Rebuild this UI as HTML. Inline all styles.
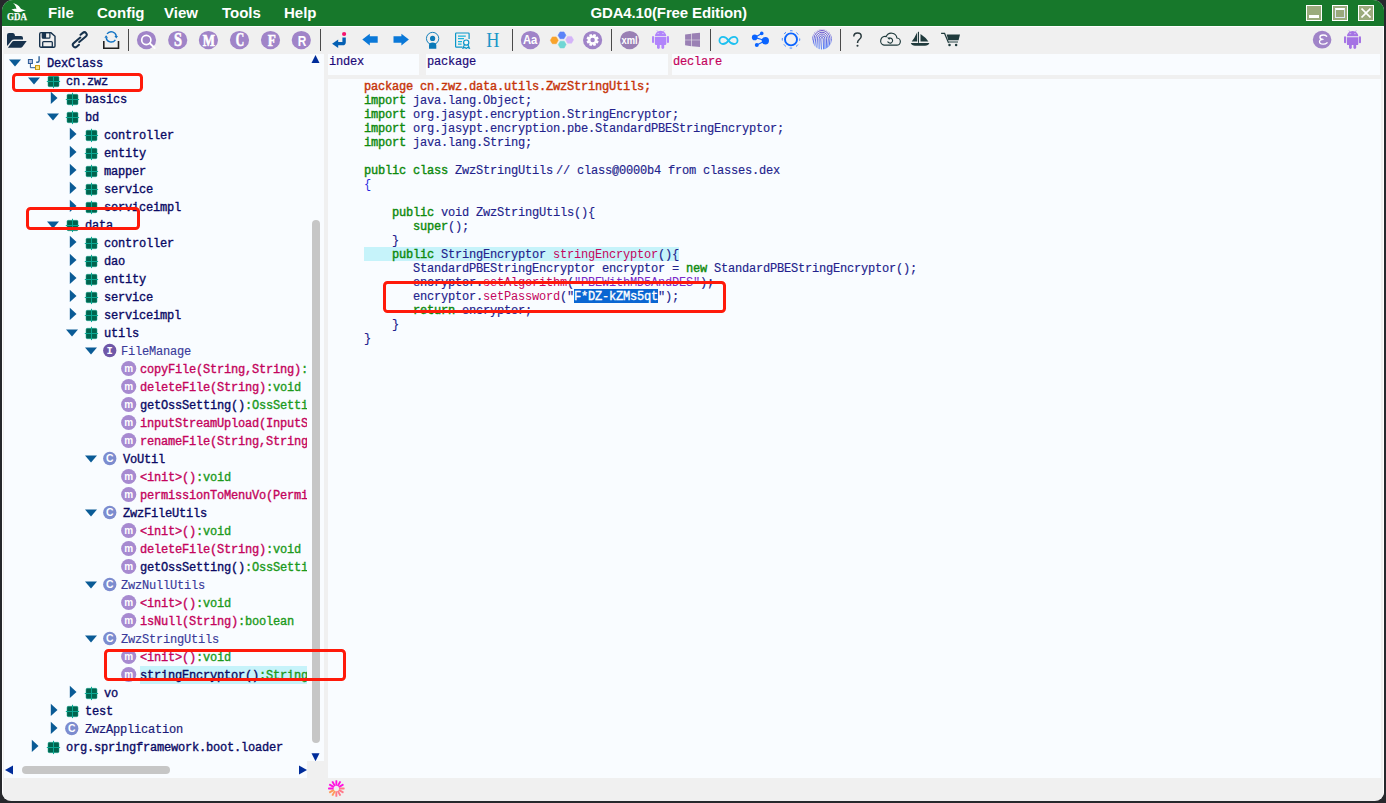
<!DOCTYPE html>
<html><head><meta charset="utf-8"><title>GDA4.10(Free Edition)</title>
<style>
html,body{margin:0;padding:0}
body{width:1386px;height:803px;overflow:hidden;background:#26282c;position:relative;font-family:"Liberation Sans",sans-serif}
#win{position:absolute;left:2px;top:0;width:1382px;height:801px;border-radius:11px 11px 9px 9px;background:#f0f0f0;overflow:hidden}
#edge{position:absolute;left:0;top:26px;width:1380px;height:774px;border:1px solid #fff;border-radius:0 0 9px 9px;pointer-events:none}
#title{position:absolute;left:0;top:0;width:1382px;height:26px;background:#17782b}
#title .mi{position:absolute;top:4px;color:#fff;font-weight:bold;font-size:15px;line-height:18px;white-space:nowrap}
.wb{position:absolute;top:5px;width:14px;height:14px;border:1px solid #fff;background:#9bab7d}
#tb{position:absolute;left:1px;top:27px;width:1380px;height:27px}
#tb svg,#tb div{position:absolute}
.sep{width:1px;top:2px;height:22px;background:#4a4a4a}
.pc{width:19px;height:19px;border-radius:50%;background:#a182c9;top:3.5px;color:#fff;text-align:center;font-weight:bold}
#tree{position:absolute;left:2px;top:54px;width:320px;height:724px;background:#f9fcff;overflow:hidden}
#tclip{position:absolute;left:0;top:0;width:303px;height:707px;overflow:hidden}
#tree svg,#tree div{position:absolute}
.ar path{fill:#0a5b96}
#tree .tt{z-index:3}
.tt{font-family:"Liberation Mono",monospace;font-size:12px;letter-spacing:-0.2px;line-height:18px;height:18px;white-space:pre}
.tt .b{color:#0a0a64;-webkit-text-stroke:0.36px #0a0a64}
.tt .c{color:#c4045c;-webkit-text-stroke:0.36px #c4045c}
.tt .g{color:#1c9a1c;-webkit-text-stroke:0.36px #1c9a1c}
.tt .l{color:#3a3a9a;-webkit-text-stroke:0.15px #3a3a9a}
.tt .l2{color:#1a1a78;-webkit-text-stroke:0.2px #1a1a78}
.ci{width:13px;height:14px;border-radius:50%;color:#fff;font:bold 10px/14px "Liberation Sans",sans-serif;text-align:center}
.cm{width:14px;height:15px;border-radius:50%;background:#a98bd1;color:#fff;font:bold 10px/12px "Liberation Sans",sans-serif;text-align:center}
.hb{position:absolute;top:54px;height:21px;background:#f9fcff;font-family:"Liberation Mono",monospace;font-size:12px;letter-spacing:-0.2px;line-height:14px;white-space:pre}
#code{position:absolute;left:326px;top:79px;width:1053px;height:699px;background:#f9fcff;overflow:hidden}
.cl{z-index:3;position:absolute;left:36px;height:14px;font-family:"Liberation Mono",monospace;font-size:12px;letter-spacing:-0.2px;line-height:14px;white-space:pre;color:#101070}
.cl .k{color:#0e8a0e;-webkit-text-stroke:0.4px #0e8a0e}
.cl .n{color:#22228c;-webkit-text-stroke:0.15px #22228c}
.cl .p{color:#c6340a;-webkit-text-stroke:0.4px #c6340a}
.cl .m{color:#c4045c}
.cl .s{color:#7a28c8}
.cl .br{color:#2a2ae0}
.cl .cm2{color:#22228c;margin-left:3px;-webkit-text-stroke:0.15px #22228c}
.cl .hl{background:linear-gradient(#0a66d2,#0a66d2) no-repeat;background-size:100% 13px;box-shadow:0 -1px 0 #0a66d2;color:#fff;-webkit-text-stroke:0.35px #fff}
.rb{z-index:5;position:absolute;border:3.3px solid #ff1a0a;border-radius:4.5px;box-sizing:border-box}
</style></head><body>
<svg width="0" height="0" style="position:absolute">
<defs>

<symbol id="pkg" viewBox="0 0 13 13" overflow="visible">
<rect x="1" y="1.3" width="11" height="10.4" rx="1.3" fill="#00644e" stroke="#12a892" stroke-width="0.5"/>
<path d="M-0.2 6.5H13.1M6.5 -0.2V13.1" stroke="#0aa893" stroke-width="1" fill="none"/>
</symbol>
<symbol id="dex" viewBox="0 0 14 15">
<rect x="1.4" y="4.5" width="4" height="4" fill="#b4c0e0" stroke="#2a5a96" stroke-width="1"/>
<path d="M3.4 9V12.7H8" fill="none" stroke="#2a5a96" stroke-width="1"/>
<path d="M12.1 1.2V5.8Q12.1 7.3 10.4 7.3H9.2" fill="none" stroke="#2a5f96" stroke-width="1.4"/>
<rect x="8.5" y="10.6" width="4" height="4" fill="#ffe680" stroke="#c8960a" stroke-width="1"/>
</symbol>

</defs></svg>
<div id="win">
<div id="title">
<svg style="position:absolute;left:4px;top:2px" width="24" height="20" viewBox="0 0 24 20"><path d="M7 1C9.5 1.6 13 3.5 14.5 6.2C15.5 7.2 17 7.6 20 8.4C17.5 8.8 15.5 9.4 14 10C11.5 10.6 8.5 10.2 7.2 8.6L5.4 7.6L7.6 7C8.8 6.6 9.8 6.8 10.4 7.2C10.4 5 8.8 2.6 7 1Z" fill="#fff"/><text x="1" y="17.8" font-family="Liberation Serif" font-weight="bold" font-size="11.4" fill="#fff" stroke="#fff" stroke-width="0.25" textLength="20" lengthAdjust="spacingAndGlyphs">GDA</text></svg>
<div class="mi" style="left:46px">File</div>
<div class="mi" style="left:95px">Config</div>
<div class="mi" style="left:162px">View</div>
<div class="mi" style="left:220px">Tools</div>
<div class="mi" style="left:282px">Help</div>
<div class="mi" style="left:588.4px;letter-spacing:-0.13px">GDA4.10(Free Edition)</div>
<div class="wb" style="left:1304px"><div style="position:absolute;left:2px;top:9px;width:10px;height:3px;background:#fff"></div></div>
<div class="wb" style="left:1330px"><div style="position:absolute;left:2px;top:2px;width:10px;height:10px;border:1px solid #dde6f4;border-top:2.5px solid #fff;box-sizing:border-box;background:#9aa87c"></div></div>
<div class="wb" style="left:1356px"><svg style="position:absolute;left:2px;top:2px" width="10" height="10" viewBox="0 0 10 10"><path d="M0.5 0.5L9.5 9.5M9.5 0.5L0.5 9.5" stroke="#fff" stroke-width="1.6"/></svg></div>
</div>
<div id="tb">
<svg style="left:4px;top:5px" width="20" height="16" viewBox="0 0 20 16" ><path d="M0 3Q0 1 2 1H5.8Q7.4 1 7.7 2.6L8 4H14Q16 4 16 6V7.4H7.2Q5.4 7.4 4.4 8.8L0.7 13.6Q0 14 0 12.8Z" fill="#17324d"/><path d="M6.6 9H19.7L15.3 14.9Q14.6 15.7 13.4 15.7H0.9L5.2 9.8Q5.8 9 6.6 9Z" fill="#17324d"/></svg>
<svg style="left:36px;top:4px" width="17" height="18" viewBox="0 -0.5 17 18" ><path d="M2 1.1H11.8L16 4.7V14.4Q16 15.7 14.7 15.7H2Q0.7 15.7 0.7 14.4V2.4Q0.7 1.1 2 1.1Z" fill="none" stroke="#17324d" stroke-width="1.4" stroke-linejoin="round"/><rect x="3.3" y="1.1" width="7.6" height="5.6" rx="0.9" fill="none" stroke="#17324d" stroke-width="1.2"/><rect x="3.3" y="1.1" width="3.8" height="5.6" fill="#17324d"/><rect x="3.7" y="10.1" width="9.6" height="5.6" rx="0.9" fill="none" stroke="#17324d" stroke-width="1.3"/></svg>
<svg style="left:67px;top:4px" width="20" height="18" viewBox="-0.25 -0.3 20 18" ><g transform="translate(9.5 8.5) rotate(-40)" fill="none" stroke="#17324d" stroke-width="2.0" stroke-linecap="round"><path d="M1.8 -1.35H-6.8A2.35 2.35 0 0 0 -6.8 3.35H-3.8"/><path d="M-1.8 1.35H6.8A2.35 2.35 0 0 0 6.8 -3.35H3.8"/></g></svg>
<svg style="left:99px;top:3px" width="19" height="20" viewBox="0 0 19 20" ><path d="M1.8 11V18.2H16.5V11" fill="none" stroke="#222" stroke-width="1.6"/><g fill="none" stroke="#1273c4" stroke-width="1.4"><path d="M5.02 3.97A5.1 5.1 0 0 1 14.25 6.19"/><path d="M13.38 9.83A5.1 5.1 0 0 1 4.15 7.61"/></g><path d="M12.399999999999999 6.0H15.999999999999998L14.299999999999999 8.6Z" fill="#1273c4"/><path d="M2.3999999999999995 7.800000000000001H6.0L4.1 5.2Z" fill="#1273c4"/></svg>
<div class="sep" style="left:125px"></div>
<svg style="left:133px;top:3px" width="21" height="20" viewBox="-0.5 0 21 20" ><ellipse cx="10" cy="10.1" rx="9.6" ry="9.2" fill="#a084c8"/><circle cx="9.8" cy="10" r="4.6" fill="none" stroke="#fff" stroke-width="1.7"/><path d="M13.2 13.3L18.2 18" stroke="#fff" stroke-width="1.9" stroke-linecap="round"/></svg>
<svg style="left:164px;top:3px" width="21" height="20" viewBox="-0.7 0 21 20" ><ellipse cx="10" cy="10.1" rx="9.6" ry="9.2" fill="#a084c8"/><text x="10.3" y="16.2" text-anchor="middle" font-family="Liberation Serif" font-weight="bold" font-size="18.6" fill="#fff" textLength="8.0" lengthAdjust="spacingAndGlyphs" stroke="#fff" stroke-width="0.6">S</text></svg>
<svg style="left:195px;top:3px" width="21" height="20" viewBox="-0.4 0 21 20" ><ellipse cx="10" cy="10.1" rx="9.6" ry="9.2" fill="#a084c8"/><text x="10.5" y="15.7" text-anchor="middle" font-family="Liberation Serif" font-weight="bold" font-size="17.3" fill="#fff" textLength="12.2" lengthAdjust="spacingAndGlyphs" stroke="#fff" stroke-width="0.7">M</text></svg>
<svg style="left:226px;top:3px" width="21" height="20" viewBox="-0.5 0 21 20" ><ellipse cx="10" cy="10.1" rx="9.6" ry="9.2" fill="#a084c8"/><text x="10.4" y="16.2" text-anchor="middle" font-family="Liberation Serif" font-weight="bold" font-size="18.6" fill="#fff" textLength="8.4" lengthAdjust="spacingAndGlyphs" stroke="#fff" stroke-width="0.7">C</text></svg>
<svg style="left:257px;top:3px" width="21" height="20" viewBox="-0.5 0 21 20" ><ellipse cx="10" cy="10.1" rx="9.6" ry="9.2" fill="#a084c8"/><text x="11.3" y="15.7" text-anchor="middle" font-family="Liberation Serif" font-weight="bold" font-size="17.3" fill="#fff" textLength="8.0" lengthAdjust="spacingAndGlyphs" stroke="#fff" stroke-width="0.6">F</text></svg>
<svg style="left:288px;top:3px" width="21" height="20" viewBox="-0.3 0 21 20" ><ellipse cx="10" cy="10.1" rx="9.6" ry="9.2" fill="#a084c8"/><text x="10.7" y="15.5" text-anchor="middle" font-family="Liberation Sans" font-weight="bold" font-size="14.1" fill="#fff" textLength="8.6" lengthAdjust="spacingAndGlyphs">R</text></svg>
<div class="sep" style="left:317px"></div>
<svg style="left:328px;top:4px" width="17" height="18" viewBox="0 0 17 18" ><circle cx="13.1" cy="3" r="2.1" fill="#f5146e"/><path d="M13.1 6.4V11.2Q13.1 12.6 11.6 12.6H6" fill="none" stroke="#0560b4" stroke-width="3.4"/><path d="M1.1 12.8L7.2 8.6V17Z" fill="#0560b4"/></svg>
<svg style="left:359px;top:6px" width="16" height="13" viewBox="0 0 16 13" ><path d="M0.3 6.6L7.8 0.8V3.3H15.7V9.7H7.8V12.4Z" fill="#0a78d8"/></svg>
<svg style="left:390px;top:6px" width="17" height="13" viewBox="-0.2 0 17 13" ><path d="M15.7 6.6L8.2 0.8V3.3H0.3V9.7H8.2V12.4Z" fill="#0a78d8"/></svg>
<svg style="left:422px;top:4px" width="15" height="19" viewBox="0 -0.6 15 19" ><circle cx="7.6" cy="6.9" r="6.15" fill="none" stroke="#0b7ab8" stroke-width="0.95"/><circle cx="7.6" cy="6.8" r="2.6" fill="#0b7ab8"/><path d="M4 17.2V13.8Q4 11 7.6 11Q11.3 11 11.3 13.8V17.2Z" fill="#0b7ab8"/></svg>
<svg style="left:451px;top:5px" width="18" height="17" viewBox="0 0 18 17" ><path d="M8.6 15.2H2.4Q1.6 15.2 1.6 14.4V1.8Q1.6 1 2.4 1H14.3Q15.1 1 15.1 1.8V7" fill="none" stroke="#0a96c8" stroke-width="1.2"/><path d="M4 4.1H11.8M4 6.7H10M4 9.6H8M4 12.2H7.6" stroke="#19b4dc" stroke-width="1.3" fill="none"/><circle cx="12.2" cy="10.6" r="2.6" fill="#f4f8fa" stroke="#0a96c8" stroke-width="1.2"/><path d="M10.4 12.8L9 16.2L11 15.4L12.2 16.6L13.4 15.4L15.4 16.2L14 12.8" fill="none" stroke="#0a96c8" stroke-width="1.1"/></svg>
<svg style="left:481px;top:3px" width="18" height="20" viewBox="0 0 18 20" ><text x="8.8" y="17.4" text-anchor="middle" font-family="Liberation Serif" font-weight="normal" font-size="21.8" fill="#1a96c8" textLength="13.2" lengthAdjust="spacingAndGlyphs">H</text></svg>
<div class="sep" style="left:509px"></div>
<svg style="left:517px;top:3px" width="21" height="20" viewBox="-0.4 0 21 20" ><ellipse cx="10" cy="10.1" rx="9.6" ry="9.2" fill="#a084c8"/><text x="9.7" y="14.3" text-anchor="middle" font-family="Liberation Sans" font-weight="bold" font-size="12.2" fill="#fff" textLength="14.4" lengthAdjust="spacingAndGlyphs">Aa</text></svg>
<svg style="left:546px;top:3px" width="26" height="20" viewBox="0 0 26 20" ><polygon points="9.25,10.30 7.27,13.72 3.32,13.72 1.35,10.30 3.32,6.88 7.27,6.88" fill="#f9a32b" stroke="#f9a32b" stroke-width="0.5" stroke-linejoin="round"/><polygon points="16.95,5.30 14.98,8.72 11.03,8.72 9.05,5.30 11.02,1.88 14.98,1.88" fill="#5a82f8" stroke="#5a82f8" stroke-width="0.5" stroke-linejoin="round"/><polygon points="17.15,14.60 15.18,18.02 11.23,18.02 9.25,14.60 11.23,11.18 15.18,11.18" fill="#6fd6d4" stroke="#6fd6d4" stroke-width="0.5" stroke-linejoin="round"/><polygon points="24.55,9.80 22.58,13.22 18.63,13.22 16.65,9.80 18.63,6.38 22.58,6.38" fill="#d4b4f8" stroke="#d4b4f8" stroke-width="0.5" stroke-linejoin="round"/></svg>
<svg style="left:579px;top:3px" width="21" height="20" viewBox="-0.6 0 21 20" ><ellipse cx="10" cy="10.1" rx="9.6" ry="9.2" fill="#a084c8"/><path d="M8.75 3.9000000000000004H11.25L11.75 6.6H8.25Z" transform="rotate(22.5 10 10)" fill="#fff"/><path d="M8.75 3.9000000000000004H11.25L11.75 6.6H8.25Z" transform="rotate(67.5 10 10)" fill="#fff"/><path d="M8.75 3.9000000000000004H11.25L11.75 6.6H8.25Z" transform="rotate(112.5 10 10)" fill="#fff"/><path d="M8.75 3.9000000000000004H11.25L11.75 6.6H8.25Z" transform="rotate(157.5 10 10)" fill="#fff"/><path d="M8.75 3.9000000000000004H11.25L11.75 6.6H8.25Z" transform="rotate(202.5 10 10)" fill="#fff"/><path d="M8.75 3.9000000000000004H11.25L11.75 6.6H8.25Z" transform="rotate(247.5 10 10)" fill="#fff"/><path d="M8.75 3.9000000000000004H11.25L11.75 6.6H8.25Z" transform="rotate(292.5 10 10)" fill="#fff"/><path d="M8.75 3.9000000000000004H11.25L11.75 6.6H8.25Z" transform="rotate(337.5 10 10)" fill="#fff"/><circle cx="10" cy="10" r="4.25" fill="#fff"/><circle cx="10" cy="10" r="2.2" fill="#a084c8"/></svg>
<div class="sep" style="left:608px"></div>
<svg style="left:616px;top:3px" width="21" height="20" viewBox="-0.6 0 21 20" ><ellipse cx="10" cy="10.1" rx="9.6" ry="9.2" fill="#9a80b4"/><text x="10" y="14.1" text-anchor="middle" font-family="Liberation Sans" font-weight="bold" font-size="10" fill="#fff" textLength="16.2" lengthAdjust="spacingAndGlyphs">xml</text></svg>
<svg style="left:649px;top:3px" width="17" height="19" viewBox="0 0 17 19" ><g fill="#b184fb" color="#b184fb"><path d="M2.9 7.1H14.3V13.8Q14.3 15 13.1 15H4.1Q2.9 15 2.9 13.8Z"/><path d="M2.9 6.2A5.7 5.4 0 0 1 14.3 6.2Z"/><rect x="0" y="6.1" width="2.1" height="7" rx="1.05"/><rect x="14.9" y="6.1" width="2.1" height="7" rx="1.05"/><rect x="5" y="13.5" width="2.8" height="5.4" rx="1.4"/><rect x="9.4" y="13.5" width="2.8" height="5.4" rx="1.4"/><path d="M4.9 0.3L5.9 1.9M12.3 0.3L11.3 1.9" stroke-width="0.6" fill="none" stroke="currentColor"/></g><rect x="5.4" y="3.3" width="1.8" height="0.7" fill="#dcc8fa"/><rect x="10" y="3.3" width="1.8" height="0.7" fill="#dcc8fa"/></svg>
<svg style="left:682px;top:5px" width="16" height="16" viewBox="0 -0.5 16 16" ><g fill="#9a80b4"><path d="M0.1 2L6.2 1.2V7.25H0.1Z"/><path d="M6.75 1.1L15 0.3V7.25H6.75Z"/><path d="M0.1 7.8H6.2V13.7L0.1 12.8Z"/><path d="M6.75 7.8H15V14.6L6.75 13.8Z"/></g></svg>
<div class="sep" style="left:707px"></div>
<svg style="left:714px;top:8px" width="23" height="11" viewBox="0 0 23 11" ><path d="M11.5 5.45C9.7 2.8 7.9 1.9 6 1.9A3.55 3.55 0 0 0 6 9C7.9 9 9.7 8.1 11.5 5.45C13.3 2.8 15.1 1.9 17 1.9A3.55 3.55 0 0 1 17 9C15.1 9 13.3 8.1 11.5 5.45Z" fill="none" stroke="#1ec0f0" stroke-width="1.8"/></svg>
<svg style="left:748px;top:4px" width="19" height="16" viewBox="0 0 19 16" ><g fill="#0a64ff"><circle cx="3.7" cy="6.4" r="2.8"/><circle cx="10.7" cy="2.4" r="1.8"/><circle cx="14.3" cy="9.7" r="3.7"/><circle cx="5.8" cy="13.9" r="2"/><path d="M3.7 6.4L10.7 2.4M3.7 6.4L14.3 9.7L5.8 13.9" stroke="#0a64ff" stroke-width="1.1" fill="none"/></g></svg>
<svg style="left:777px;top:1px" width="22" height="23" viewBox="0 -0.4 22 23" ><circle cx="11" cy="11" r="6" fill="none" stroke="#0a64ff" stroke-width="1.9"/><circle cx="11" cy="11" r="8.7" fill="none" stroke="#0a64ff" stroke-width="0.8" stroke-dasharray="2.6 4.233" stroke-dashoffset="1.3"/></svg>
<svg style="left:808px;top:1px" width="22" height="23" viewBox="0 -0.4 22 23" ><defs><linearGradient id="fpg" gradientUnits="userSpaceOnUse" x1="0" y1="1" x2="0" y2="21"><stop offset="0" stop-color="#5a3cc0"/><stop offset="1" stop-color="#3a70ff"/></linearGradient><clipPath id="fpc"><ellipse cx="11" cy="11" rx="9.9" ry="10.2"/></clipPath></defs><g clip-path="url(#fpc)"><path d="M10.61 23L9.8 10.4A1.2 1.25 0 0 1 12.2 10.4L12.65 23" fill="none" stroke="url(#fpg)" stroke-width="0.85"/><path d="M8.10 23L8.1 10.4A2.9 3.02 0 0 1 13.9 10.4L13.90 23" fill="none" stroke="url(#fpg)" stroke-width="0.85"/><path d="M5.59 23L6.4 10.4A4.6 4.78 0 0 1 15.6 10.4L15.15 23" fill="none" stroke="url(#fpg)" stroke-width="0.85"/><path d="M3.08 23L4.7 10.4A6.3 6.55 0 0 1 17.3 10.4L16.40 23" fill="none" stroke="url(#fpg)" stroke-width="0.85"/><path d="M0.57 23L3.0 10.4A8.0 8.32 0 0 1 19.0 10.4L17.65 23" fill="none" stroke="url(#fpg)" stroke-width="0.85"/><path d="M-1.94 23L1.3000000000000007 10.4A9.7 10.09 0 0 1 20.7 10.4L18.90 23" fill="none" stroke="url(#fpg)" stroke-width="0.85"/></g></svg>
<div class="sep" style="left:837px"></div>
<svg style="left:846px;top:3px" width="18" height="20" viewBox="0 0 18 20" ><path d="M4.8 6.6Q4.8 3 8.6 3Q12.2 3 12.2 6.2Q12.2 8 10.3 9.5Q8.5 10.9 8.5 13.1" fill="none" stroke="#2a3a3e" stroke-width="1.5"/><circle cx="8.5" cy="15.8" r="1.05" fill="#2a3a3e"/></svg>
<svg style="left:875px;top:5px" width="24" height="15" viewBox="0 0 24 15" ><path d="M6 13.2H18.6A3.6 3.6 0 0 0 18.9 6A5.6 5.6 0 0 0 8.2 4.6A4.4 4.4 0 0 0 6 13.2Z" fill="none" stroke="#1f3a3c" stroke-width="1.2"/><path d="M10.6 6.6A2.5 2.5 0 1 1 9.7 9.3" fill="none" stroke="#1f3a3c" stroke-width="1.1"/><path d="M9 5.6L11.8 5.4L11.4 8Z" fill="#1f3a3c"/></svg>
<svg style="left:907px;top:4px" width="20" height="16" viewBox="0 0 20 16" ><g fill="#1f3a3c"><path d="M7.2 1.2V10.6H1.7Q4.6 7 7.2 1.2Z"/><path d="M10.5 3.1Q15.6 6.4 18.4 10.6H10.5Z"/><rect x="8" y="0.8" width="1" height="11" /><path d="M0.8 12H19.4Q18.4 14.8 15 14.8H5Q1.8 14.8 0.8 12Z"/></g></svg>
<svg style="left:937px;top:5px" width="21" height="15" viewBox="0 0 21 15" ><g fill="#1f3a3c"><path d="M6.7 2.6H20L18.6 8.2H8.2Z"/><path d="M1.1 1.4H4.6L8.6 11" fill="none" stroke="#1f3a3c" stroke-width="1.2"/><path d="M8 10H18" stroke="#4a6264" stroke-width="1.2"/><circle cx="9.5" cy="12.9" r="1.25"/><circle cx="16.1" cy="12.9" r="1.25"/></g></svg>
<svg style="left:1309px;top:2px" width="21" height="21" viewBox="-0.1 -0.6 21 21" ><ellipse cx="10" cy="10.1" rx="9.3" ry="8.9" fill="#a084c8"/><path d="M14.6 6.6Q13.4 5.4 11 5.4Q7.8 5.4 7.8 7.6Q7.8 9.7 11 9.8Q7.4 9.9 7.4 12.2Q7.4 14.6 11 14.6Q13.6 14.6 15 13.2" fill="none" stroke="#fff" stroke-width="1.3" stroke-linecap="round"/><circle cx="11.2" cy="9.8" r="0.7" fill="#d8c8f0"/></svg>
<svg style="left:1341px;top:3px" width="17" height="20" viewBox="0 -0.1 17 20" ><g fill="#a573e4" color="#a573e4"><path d="M2.9 7.1H14.3V13.8Q14.3 15 13.1 15H4.1Q2.9 15 2.9 13.8Z"/><path d="M2.9 6.2A5.7 5.4 0 0 1 14.3 6.2Z"/><rect x="0" y="6.1" width="2.1" height="7" rx="1.05"/><rect x="14.9" y="6.1" width="2.1" height="7" rx="1.05"/><rect x="5" y="13.5" width="2.8" height="5.4" rx="1.4"/><rect x="9.4" y="13.5" width="2.8" height="5.4" rx="1.4"/><path d="M4.9 0.3L5.9 1.9M12.3 0.3L11.3 1.9" stroke-width="0.6" fill="none" stroke="currentColor"/></g><rect x="5.4" y="3.3" width="1.8" height="0.7" fill="#dcc8fa"/><rect x="10" y="3.3" width="1.8" height="0.7" fill="#dcc8fa"/></svg>
</div>
<div id="tree">
<div id="tclip">
<svg class="ar" style="left:5px;top:5px" width="12" height="8" viewBox="0 0 12 8"><path d="M0 0.5H12L6 7.4Z"/></svg>
<svg class="ic" style="left:23px;top:1px" width="14" height="15" viewBox="0 0 14 15"><use href="#dex"/></svg>
<div class="tt" style="left:43px;top:1px"><span class="b">DexClass</span></div>
<svg class="ar" style="left:24px;top:23px" width="12" height="8" viewBox="0 0 12 8"><path d="M0 0.5H12L6 7.4Z"/></svg>
<svg class="ic" style="left:43px;top:21px;overflow:visible" width="13" height="13" viewBox="0 0 13 13"><use href="#pkg"/></svg>
<div class="tt" style="left:62px;top:19px"><span class="b">cn.zwz</span></div>
<svg class="ar" style="left:46px;top:37px" width="8" height="14" viewBox="0 0 8 14"><path d="M0.8 0.8L7.5 6.9L0.8 13Z"/></svg>
<svg class="ic" style="left:62px;top:39px;overflow:visible" width="13" height="13" viewBox="0 0 13 13"><use href="#pkg"/></svg>
<div class="tt" style="left:81px;top:37px"><span class="b">basics</span></div>
<svg class="ar" style="left:43px;top:59px" width="12" height="8" viewBox="0 0 12 8"><path d="M0 0.5H12L6 7.4Z"/></svg>
<svg class="ic" style="left:62px;top:57px;overflow:visible" width="13" height="13" viewBox="0 0 13 13"><use href="#pkg"/></svg>
<div class="tt" style="left:81px;top:55px"><span class="b">bd</span></div>
<svg class="ar" style="left:65px;top:73px" width="8" height="14" viewBox="0 0 8 14"><path d="M0.8 0.8L7.5 6.9L0.8 13Z"/></svg>
<svg class="ic" style="left:81px;top:75px;overflow:visible" width="13" height="13" viewBox="0 0 13 13"><use href="#pkg"/></svg>
<div class="tt" style="left:100px;top:73px"><span class="b">controller</span></div>
<svg class="ar" style="left:65px;top:91px" width="8" height="14" viewBox="0 0 8 14"><path d="M0.8 0.8L7.5 6.9L0.8 13Z"/></svg>
<svg class="ic" style="left:81px;top:93px;overflow:visible" width="13" height="13" viewBox="0 0 13 13"><use href="#pkg"/></svg>
<div class="tt" style="left:100px;top:91px"><span class="b">entity</span></div>
<svg class="ar" style="left:65px;top:109px" width="8" height="14" viewBox="0 0 8 14"><path d="M0.8 0.8L7.5 6.9L0.8 13Z"/></svg>
<svg class="ic" style="left:81px;top:111px;overflow:visible" width="13" height="13" viewBox="0 0 13 13"><use href="#pkg"/></svg>
<div class="tt" style="left:100px;top:109px"><span class="b">mapper</span></div>
<svg class="ar" style="left:65px;top:127px" width="8" height="14" viewBox="0 0 8 14"><path d="M0.8 0.8L7.5 6.9L0.8 13Z"/></svg>
<svg class="ic" style="left:81px;top:129px;overflow:visible" width="13" height="13" viewBox="0 0 13 13"><use href="#pkg"/></svg>
<div class="tt" style="left:100px;top:127px"><span class="b">service</span></div>
<svg class="ar" style="left:65px;top:145px" width="8" height="14" viewBox="0 0 8 14"><path d="M0.8 0.8L7.5 6.9L0.8 13Z"/></svg>
<svg class="ic" style="left:81px;top:147px;overflow:visible" width="13" height="13" viewBox="0 0 13 13"><use href="#pkg"/></svg>
<div class="tt" style="left:100px;top:145px"><span class="b">serviceimpl</span></div>
<svg class="ar" style="left:43px;top:167px" width="12" height="8" viewBox="0 0 12 8"><path d="M0 0.5H12L6 7.4Z"/></svg>
<svg class="ic" style="left:62px;top:165px;overflow:visible" width="13" height="13" viewBox="0 0 13 13"><use href="#pkg"/></svg>
<div class="tt" style="left:81px;top:163px"><span class="b">data</span></div>
<svg class="ar" style="left:65px;top:181px" width="8" height="14" viewBox="0 0 8 14"><path d="M0.8 0.8L7.5 6.9L0.8 13Z"/></svg>
<svg class="ic" style="left:81px;top:183px;overflow:visible" width="13" height="13" viewBox="0 0 13 13"><use href="#pkg"/></svg>
<div class="tt" style="left:100px;top:181px"><span class="b">controller</span></div>
<svg class="ar" style="left:65px;top:199px" width="8" height="14" viewBox="0 0 8 14"><path d="M0.8 0.8L7.5 6.9L0.8 13Z"/></svg>
<svg class="ic" style="left:81px;top:201px;overflow:visible" width="13" height="13" viewBox="0 0 13 13"><use href="#pkg"/></svg>
<div class="tt" style="left:100px;top:199px"><span class="b">dao</span></div>
<svg class="ar" style="left:65px;top:217px" width="8" height="14" viewBox="0 0 8 14"><path d="M0.8 0.8L7.5 6.9L0.8 13Z"/></svg>
<svg class="ic" style="left:81px;top:219px;overflow:visible" width="13" height="13" viewBox="0 0 13 13"><use href="#pkg"/></svg>
<div class="tt" style="left:100px;top:217px"><span class="b">entity</span></div>
<svg class="ar" style="left:65px;top:235px" width="8" height="14" viewBox="0 0 8 14"><path d="M0.8 0.8L7.5 6.9L0.8 13Z"/></svg>
<svg class="ic" style="left:81px;top:237px;overflow:visible" width="13" height="13" viewBox="0 0 13 13"><use href="#pkg"/></svg>
<div class="tt" style="left:100px;top:235px"><span class="b">service</span></div>
<svg class="ar" style="left:65px;top:253px" width="8" height="14" viewBox="0 0 8 14"><path d="M0.8 0.8L7.5 6.9L0.8 13Z"/></svg>
<svg class="ic" style="left:81px;top:255px;overflow:visible" width="13" height="13" viewBox="0 0 13 13"><use href="#pkg"/></svg>
<div class="tt" style="left:100px;top:253px"><span class="b">serviceimpl</span></div>
<svg class="ar" style="left:62px;top:275px" width="12" height="8" viewBox="0 0 12 8"><path d="M0 0.5H12L6 7.4Z"/></svg>
<svg class="ic" style="left:81px;top:273px;overflow:visible" width="13" height="13" viewBox="0 0 13 13"><use href="#pkg"/></svg>
<div class="tt" style="left:100px;top:271px"><span class="b">utils</span></div>
<svg class="ar" style="left:81px;top:293px" width="12" height="8" viewBox="0 0 12 8"><path d="M0 0.5H12L6 7.4Z"/></svg>
<svg class="ic" style="left:99px;top:289px" width="14" height="15" viewBox="0 0 14 15"><circle cx="6.75" cy="7.5" r="6.65" fill="#6f57a8"/><text x="6.75" y="10.9" text-anchor="middle" font-family="Liberation Mono" font-weight="bold" font-size="10.5" fill="#fff">I</text></svg>
<div class="tt" style="left:117px;top:289px"><span class="l">FileManage</span></div>
<svg class="ic" style="left:116px;top:306px" width="17" height="17" viewBox="0 0 17 17"><circle cx="8.7" cy="8.5" r="7.6" fill="#a78ad0"/><text x="8.7" y="11.9" text-anchor="middle" font-family="Liberation Sans" font-weight="bold" font-size="10" fill="#fff">m</text></svg>
<div class="tt" style="left:136px;top:307px"><span class="c">copyFile(String,String)</span><span class="g">:void</span></div>
<svg class="ic" style="left:116px;top:324px" width="17" height="17" viewBox="0 0 17 17"><circle cx="8.7" cy="8.5" r="7.6" fill="#a78ad0"/><text x="8.7" y="11.9" text-anchor="middle" font-family="Liberation Sans" font-weight="bold" font-size="10" fill="#fff">m</text></svg>
<div class="tt" style="left:136px;top:325px"><span class="c">deleteFile(String)</span><span class="g">:void</span></div>
<svg class="ic" style="left:116px;top:342px" width="17" height="17" viewBox="0 0 17 17"><circle cx="8.7" cy="8.5" r="7.6" fill="#a78ad0"/><text x="8.7" y="11.9" text-anchor="middle" font-family="Liberation Sans" font-weight="bold" font-size="10" fill="#fff">m</text></svg>
<div class="tt" style="left:136px;top:343px"><span class="b">getOssSetting()</span><span class="g">:OssSetting</span></div>
<svg class="ic" style="left:116px;top:360px" width="17" height="17" viewBox="0 0 17 17"><circle cx="8.7" cy="8.5" r="7.6" fill="#a78ad0"/><text x="8.7" y="11.9" text-anchor="middle" font-family="Liberation Sans" font-weight="bold" font-size="10" fill="#fff">m</text></svg>
<div class="tt" style="left:136px;top:361px"><span class="c">inputStreamUpload(InputStream)</span><span class="g">:void</span></div>
<svg class="ic" style="left:116px;top:378px" width="17" height="17" viewBox="0 0 17 17"><circle cx="8.7" cy="8.5" r="7.6" fill="#a78ad0"/><text x="8.7" y="11.9" text-anchor="middle" font-family="Liberation Sans" font-weight="bold" font-size="10" fill="#fff">m</text></svg>
<div class="tt" style="left:136px;top:379px"><span class="c">renameFile(String,String)</span><span class="g">:void</span></div>
<svg class="ar" style="left:81px;top:401px" width="12" height="8" viewBox="0 0 12 8"><path d="M0 0.5H12L6 7.4Z"/></svg>
<svg class="ic" style="left:99px;top:397px" width="14" height="15" viewBox="0 0 14 15"><circle cx="6.75" cy="7.5" r="6.65" fill="#7c8ccf"/><text x="6.75" y="11.2" text-anchor="middle" font-family="Liberation Sans" font-weight="bold" font-size="10.4" fill="#fff">C</text></svg>
<div class="tt" style="left:119px;top:397px"><span class="b">VoUtil</span></div>
<svg class="ic" style="left:116px;top:414px" width="17" height="17" viewBox="0 0 17 17"><circle cx="8.7" cy="8.5" r="7.6" fill="#a78ad0"/><text x="8.7" y="11.9" text-anchor="middle" font-family="Liberation Sans" font-weight="bold" font-size="10" fill="#fff">m</text></svg>
<div class="tt" style="left:136px;top:415px"><span class="c">&lt;init&gt;()</span><span class="g">:void</span></div>
<svg class="ic" style="left:116px;top:432px" width="17" height="17" viewBox="0 0 17 17"><circle cx="8.7" cy="8.5" r="7.6" fill="#a78ad0"/><text x="8.7" y="11.9" text-anchor="middle" font-family="Liberation Sans" font-weight="bold" font-size="10" fill="#fff">m</text></svg>
<div class="tt" style="left:136px;top:433px"><span class="c">permissionToMenuVo(Permission)</span><span class="g">:void</span></div>
<svg class="ar" style="left:81px;top:455px" width="12" height="8" viewBox="0 0 12 8"><path d="M0 0.5H12L6 7.4Z"/></svg>
<svg class="ic" style="left:99px;top:451px" width="14" height="15" viewBox="0 0 14 15"><circle cx="6.75" cy="7.5" r="6.65" fill="#7c8ccf"/><text x="6.75" y="11.2" text-anchor="middle" font-family="Liberation Sans" font-weight="bold" font-size="10.4" fill="#fff">C</text></svg>
<div class="tt" style="left:119px;top:451px"><span class="b">ZwzFileUtils</span></div>
<svg class="ic" style="left:116px;top:468px" width="17" height="17" viewBox="0 0 17 17"><circle cx="8.7" cy="8.5" r="7.6" fill="#a78ad0"/><text x="8.7" y="11.9" text-anchor="middle" font-family="Liberation Sans" font-weight="bold" font-size="10" fill="#fff">m</text></svg>
<div class="tt" style="left:136px;top:469px"><span class="c">&lt;init&gt;()</span><span class="g">:void</span></div>
<svg class="ic" style="left:116px;top:486px" width="17" height="17" viewBox="0 0 17 17"><circle cx="8.7" cy="8.5" r="7.6" fill="#a78ad0"/><text x="8.7" y="11.9" text-anchor="middle" font-family="Liberation Sans" font-weight="bold" font-size="10" fill="#fff">m</text></svg>
<div class="tt" style="left:136px;top:487px"><span class="c">deleteFile(String)</span><span class="g">:void</span></div>
<svg class="ic" style="left:116px;top:504px" width="17" height="17" viewBox="0 0 17 17"><circle cx="8.7" cy="8.5" r="7.6" fill="#a78ad0"/><text x="8.7" y="11.9" text-anchor="middle" font-family="Liberation Sans" font-weight="bold" font-size="10" fill="#fff">m</text></svg>
<div class="tt" style="left:136px;top:505px"><span class="b">getOssSetting()</span><span class="g">:OssSetting</span></div>
<svg class="ar" style="left:81px;top:527px" width="12" height="8" viewBox="0 0 12 8"><path d="M0 0.5H12L6 7.4Z"/></svg>
<svg class="ic" style="left:99px;top:523px" width="14" height="15" viewBox="0 0 14 15"><circle cx="6.75" cy="7.5" r="6.65" fill="#7c8ccf"/><text x="6.75" y="11.2" text-anchor="middle" font-family="Liberation Sans" font-weight="bold" font-size="10.4" fill="#fff">C</text></svg>
<div class="tt" style="left:117px;top:523px"><span class="l">ZwzNullUtils</span></div>
<svg class="ic" style="left:116px;top:540px" width="17" height="17" viewBox="0 0 17 17"><circle cx="8.7" cy="8.5" r="7.6" fill="#a78ad0"/><text x="8.7" y="11.9" text-anchor="middle" font-family="Liberation Sans" font-weight="bold" font-size="10" fill="#fff">m</text></svg>
<div class="tt" style="left:136px;top:541px"><span class="c">&lt;init&gt;()</span><span class="g">:void</span></div>
<svg class="ic" style="left:116px;top:558px" width="17" height="17" viewBox="0 0 17 17"><circle cx="8.7" cy="8.5" r="7.6" fill="#a78ad0"/><text x="8.7" y="11.9" text-anchor="middle" font-family="Liberation Sans" font-weight="bold" font-size="10" fill="#fff">m</text></svg>
<div class="tt" style="left:136px;top:559px"><span class="c">isNull(String)</span><span class="g">:boolean</span></div>
<svg class="ar" style="left:81px;top:581px" width="12" height="8" viewBox="0 0 12 8"><path d="M0 0.5H12L6 7.4Z"/></svg>
<svg class="ic" style="left:99px;top:577px" width="14" height="15" viewBox="0 0 14 15"><circle cx="6.75" cy="7.5" r="6.65" fill="#7c8ccf"/><text x="6.75" y="11.2" text-anchor="middle" font-family="Liberation Sans" font-weight="bold" font-size="10.4" fill="#fff">C</text></svg>
<div class="tt" style="left:117px;top:577px"><span class="l">ZwzStringUtils</span></div>
<svg class="ic" style="left:116px;top:594px" width="17" height="17" viewBox="0 0 17 17"><circle cx="8.7" cy="8.5" r="7.6" fill="#a78ad0"/><text x="8.7" y="11.9" text-anchor="middle" font-family="Liberation Sans" font-weight="bold" font-size="10" fill="#fff">m</text></svg>
<div class="tt" style="left:136px;top:595px"><span class="c">&lt;init&gt;()</span><span class="g">:void</span></div>
<svg class="ic" style="left:116px;top:612px" width="17" height="17" viewBox="0 0 17 17"><circle cx="8.7" cy="8.5" r="7.6" fill="#a78ad0"/><text x="8.7" y="11.9" text-anchor="middle" font-family="Liberation Sans" font-weight="bold" font-size="10" fill="#fff">m</text></svg>
<div style="left:136px;top:612px;width:200px;height:18px;background:#c6f3fa"></div>
<div class="tt" style="left:136px;top:613px"><span class="b">stringEncryptor()</span><span class="g">:StringEncryptor</span></div>
<svg class="ar" style="left:65px;top:631px" width="8" height="14" viewBox="0 0 8 14"><path d="M0.8 0.8L7.5 6.9L0.8 13Z"/></svg>
<svg class="ic" style="left:81px;top:633px;overflow:visible" width="13" height="13" viewBox="0 0 13 13"><use href="#pkg"/></svg>
<div class="tt" style="left:100px;top:631px"><span class="b">vo</span></div>
<svg class="ar" style="left:46px;top:649px" width="8" height="14" viewBox="0 0 8 14"><path d="M0.8 0.8L7.5 6.9L0.8 13Z"/></svg>
<svg class="ic" style="left:62px;top:651px;overflow:visible" width="13" height="13" viewBox="0 0 13 13"><use href="#pkg"/></svg>
<div class="tt" style="left:81px;top:649px"><span class="b">test</span></div>
<svg class="ar" style="left:46px;top:667px" width="8" height="14" viewBox="0 0 8 14"><path d="M0.8 0.8L7.5 6.9L0.8 13Z"/></svg>
<svg class="ic" style="left:61px;top:667px" width="14" height="15" viewBox="0 0 14 15"><circle cx="6.75" cy="7.5" r="6.65" fill="#7c8ccf"/><text x="6.75" y="11.2" text-anchor="middle" font-family="Liberation Sans" font-weight="bold" font-size="10.4" fill="#fff">C</text></svg>
<div class="tt" style="left:81px;top:667px"><span class="l2">ZwzApplication</span></div>
<svg class="ar" style="left:27px;top:685px" width="8" height="14" viewBox="0 0 8 14"><path d="M0.8 0.8L7.5 6.9L0.8 13Z"/></svg>
<svg class="ic" style="left:43px;top:687px;overflow:visible" width="13" height="13" viewBox="0 0 13 13"><use href="#pkg"/></svg>
<div class="tt" style="left:62px;top:685px"><span class="b">org.springframework.boot.loader</span></div>
</div>
<div style="left:308px;top:166px;width:8px;height:523px;border-radius:4px;background:#c6c6c6"></div>
<svg style="left:307px;top:1px" width="9" height="8" viewBox="-0.5 0 9 8" ><path d="M4 0L8 8H0Z" fill="#002c9a"/></svg>
<svg style="left:307px;top:699px" width="9" height="9" viewBox="-0.5 -0.3 9 9" ><path d="M4 8L8 0H0Z" fill="#002c9a"/></svg>
<div style="left:303px;top:707px;width:17px;height:17px;background:#f0f0f0"></div>
<svg style="left:1px;top:711px" width="8" height="10" viewBox="0 -0.5 8 10" ><path d="M0 4.5L8 0V9Z" fill="#002c9a"/></svg>
<svg style="left:295px;top:711px" width="8" height="10" viewBox="0 -0.5 8 10" ><path d="M8 4.5L0 0V9Z" fill="#002c9a"/></svg>
<div style="left:18px;top:712px;width:148px;height:8px;border-radius:4px;background:#c6c6c6"></div>
</div>
<div class="hb" style="left:326px;width:91px"><span style="position:absolute;left:1px;top:1px;color:#1d0a78;-webkit-text-stroke:0.2px #1d0a78">index</span></div>
<div class="hb" style="left:424px;width:242px"><span style="position:absolute;left:1px;top:1px;color:#1d0a78;-webkit-text-stroke:0.2px #1d0a78">package</span></div>
<div class="hb" style="left:670px;width:708px"><span style="position:absolute;left:1px;top:1px;color:#c4045c;-webkit-text-stroke:0.2px #c4045c">declare</span></div>
<div id="code">
<div style="position:absolute;left:36px;top:168px;width:315px;height:14px;background:#c6f3fa"></div>
<div class="cl" style="top:1px"><span class="p">package</span><span class="p"> cn.zwz.data.utils.ZwzStringUtils;</span></div>
<div class="cl" style="top:15px"><span class="k">import</span><span class="n"> java.lang.Object;</span></div>
<div class="cl" style="top:29px"><span class="k">import</span><span class="n"> org.jasypt.encryption.StringEncryptor;</span></div>
<div class="cl" style="top:43px"><span class="k">import</span><span class="n"> org.jasypt.encryption.pbe.StandardPBEStringEncryptor;</span></div>
<div class="cl" style="top:57px"><span class="k">import</span><span class="n"> java.lang.String;</span></div>
<div class="cl" style="top:85px"><span class="k">public class</span><span class="n"> ZwzStringUtils</span><span class="cm2">// class@0000b4 from classes.dex</span></div>
<div class="cl" style="top:99px"><span class="br">{</span></div>
<div class="cl" style="top:127px"><span class="n">    </span><span class="k">public</span><span class="n"> void ZwzStringUtils(){</span></div>
<div class="cl" style="top:141px"><span class="n">       </span><span class="k">super</span><span class="n">();</span></div>
<div class="cl" style="top:155px"><span class="n">    }</span></div>
<div class="cl" style="top:169px"><span class="n">    </span><span class="k">public</span><span class="n"> StringEncryptor </span><span class="m">stringEncryptor</span><span class="n">(){</span></div>
<div class="cl" style="top:183px"><span class="n">       StandardPBEStringEncryptor encryptor = </span><span class="k">new</span><span class="n"> StandardPBEStringEncryptor();</span></div>
<div class="cl" style="top:197px"><span class="n">       encryptor.</span><span class="m">setAlgorithm</span><span class="n">(</span><span class="s">"PBEWithMD5AndDES"</span><span class="n">);</span></div>
<div class="cl" style="top:211px"><span class="n">       encryptor.</span><span class="m">setPassword</span><span class="n">("</span><span class="hl">F*DZ-kZMs5qt</span><span class="n">");</span></div>
<div class="cl" style="top:225px"><span class="n">       </span><span class="k">return</span><span class="n"> encryptor;</span></div>
<div class="cl" style="top:239px"><span class="n">    }</span></div>
<div class="cl" style="top:253px"><span class="n">}</span></div>
</div>
<svg style="position:absolute;left:326px;top:780px" width="17" height="17" viewBox="0 0 17 17"><rect x="7.4" y="0.2" width="1.9" height="5.6" rx="0.6" fill="#ff14e0" transform="rotate(0 8.35 8.5)"/><rect x="7.4" y="0.2" width="1.9" height="5.6" rx="0.6" fill="#ff14e0" transform="rotate(30 8.35 8.5)"/><rect x="7.4" y="0.2" width="1.9" height="5.6" rx="0.6" fill="#ff14e0" transform="rotate(60 8.35 8.5)"/><rect x="7.4" y="0.2" width="1.9" height="5.6" rx="0.6" fill="#ff7a8a" transform="rotate(90 8.35 8.5)"/><rect x="7.4" y="0.2" width="1.9" height="5.6" rx="0.6" fill="#ff7a8a" transform="rotate(120 8.35 8.5)"/><rect x="7.4" y="0.2" width="1.9" height="5.6" rx="0.6" fill="#ff7a8a" transform="rotate(150 8.35 8.5)"/><rect x="7.4" y="0.2" width="1.9" height="5.6" rx="0.6" fill="#ff7a8a" transform="rotate(180 8.35 8.5)"/><rect x="7.4" y="0.2" width="1.9" height="5.6" rx="0.6" fill="#ff9a5a" transform="rotate(210 8.35 8.5)"/><rect x="7.4" y="0.2" width="1.9" height="5.6" rx="0.6" fill="#ff9a5a" transform="rotate(240 8.35 8.5)"/><rect x="7.4" y="0.2" width="1.9" height="5.6" rx="0.6" fill="#ff14e0" transform="rotate(270 8.35 8.5)"/><rect x="7.4" y="0.2" width="1.9" height="5.6" rx="0.6" fill="#ff14e0" transform="rotate(300 8.35 8.5)"/><rect x="7.4" y="0.2" width="1.9" height="5.6" rx="0.6" fill="#ff14e0" transform="rotate(330 8.35 8.5)"/></svg>
<div id="edge"></div>
</div>
<div class="rb" style="left:12.3px;top:73.2px;width:131.2px;height:18.39999999999999px"></div>
<div class="rb" style="left:25.8px;top:207.3px;width:113.8px;height:22.899999999999977px"></div>
<div class="rb" style="left:104.4px;top:649.4px;width:242.1px;height:31.899999999999977px"></div>
<div class="rb" style="left:383.3px;top:281.2px;width:342.3px;height:32.30000000000001px"></div>
</body></html>
